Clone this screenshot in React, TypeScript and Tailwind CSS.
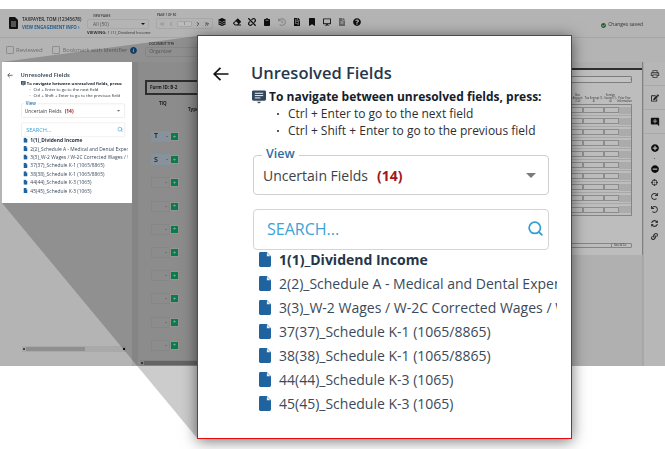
import React from "react";
import {
  FaLayerGroup, FaEraser, FaUnlink, FaClipboard, FaHistory, FaFileInvoice, FaBookmark, FaDesktop, FaFileAlt,
  FaQuestionCircle, FaCheckCircle, FaInfoCircle, FaPlusCircle, FaMinusCircle, FaCrosshairs, FaUndo, FaRedo, FaSyncAlt, FaLink, FaEdit,
} from "react-icons/fa";
import { MdAddComment, MdOutlinePrint } from "react-icons/md";
import { ChevronLeft, ChevronRight, ChevronsLeft, ChevronsRight, Search } from "lucide-react";

const files = [
  "2(2)_Schedule A - Medical and Dental Expenses",
  "3(3)_W-2 Wages / W-2C Corrected Wages / W-2G",
  "37(37)_Schedule K-1 (1065/8865)",
  "38(38)_Schedule K-1 (1065/8865)",
  "44(44)_Schedule K-3 (1065)",
  "45(45)_Schedule K-3 (1065)",
];

function FileIcon() {
  return (
    <svg width="12" height="15" viewBox="0 0 13 16" className="shrink-0">
      <path d="M1.5 0H8.5L13 4.5V14.5A1.5 1.5 0 0 1 11.5 16H1.5A1.5 1.5 0 0 1 0 14.5V1.5A1.5 1.5 0 0 1 1.5 0Z" fill="#20649f" />
      <path d="M8.5 0.5V4.5H12.5Z" fill="#e8eff5" />
    </svg>
  );
}

function MessageIcon() {
  return (
    <svg width="14" height="14" viewBox="0 0 15 14" className="shrink-0">
      <path d="M1.5 0H13.5A1.5 1.5 0 0 1 15 1.5V9.5A1.5 1.5 0 0 1 13.5 11H1.5A1.5 1.5 0 0 1 0 9.5V1.5A1.5 1.5 0 0 1 1.5 0Z" fill="#33475b" />
      <path d="M3 3H12M3 5.5H12M3 8H9" stroke="#fff" strokeWidth="1" />
      <path d="M5 12.2H10L7.5 14Z" fill="#33475b" />
    </svg>
  );
}

function Panel() {
  return (
    <div className="flex h-full w-full flex-col bg-white">
      <div className="mt-[24px] flex h-[27px] items-center">
        <svg width="16" height="14" viewBox="0 0 16 14" className="ml-[15px]">
          <path d="M15.5 7H1.5M7.5 0.8L1.2 7L7.5 13.2" fill="none" stroke="#111" strokeWidth="1.7" />
        </svg>
        <span className="ml-[22px] text-[16.5px] font-semibold text-[#26384c]">Unresolved Fields</span>
      </div>
      <div className="ml-[54px] mt-[1px] flex h-[17px] items-center">
        <MessageIcon />
        <span className="ml-[3px] whitespace-nowrap text-[12px] font-bold text-[#16202a]">To navigate between unresolved fields, press:</span>
      </div>
      <ul className="ml-[79px] text-[12px] text-[#2b2f33]">
        <li className="flex h-[17px] items-center whitespace-nowrap"><span className="mr-[9px] h-[2px] w-[2px] rounded-full bg-[#222]" />Ctrl + Enter to go to the next field</li>
        <li className="flex h-[17px] items-center whitespace-nowrap"><span className="mr-[9px] h-[2px] w-[2px] rounded-full bg-[#222]" />Ctrl + Shift + Enter to go to the previous field</li>
      </ul>
      <div className="relative ml-[55px] mt-[16px] flex h-[40px] w-[296px] items-center rounded-[4px] border border-[#cfcfcf] pl-[9px]">
        <span className="absolute -top-[11px] left-[8px] bg-white px-[4px] text-[12.5px] font-semibold leading-[18px] text-[#2d6ea5]">View</span>
        <span className="text-[14px] text-[#3d4247]">Uncertain Fields</span>
        <span className="ml-[9px] text-[14px] font-bold text-[#a3151b]">(14)</span>
        <span className="ml-auto mr-[12px] h-0 w-0 border-x-[5.5px] border-t-[5px] border-x-transparent border-t-[#7b7b7b]" />
      </div>
      <div className="ml-[55px] mt-[14px] flex h-[41px] w-[296px] items-center rounded-[4px] border border-[#d4d4d4] pb-[2px] pl-[13px]">
        <span className="text-[16px] text-[#3ba3d6]">SEARCH...</span>
        <Search className="ml-auto mr-[4px]" size={17} strokeWidth={2.4} color="#2f9fd2" />
      </div>
      <div className="-mt-[3px] ml-[61px] w-[298px] overflow-hidden">
        <div className="flex h-[24px] items-center gap-[8px] whitespace-nowrap text-[14px] font-bold text-[#25354a]"><FileIcon />1(1)_Dividend Income</div>
        {files.map((name) => (
          <div key={name} className="flex h-[24px] items-center gap-[8px] whitespace-nowrap text-[14px] text-[#3b4a5a]"><FileIcon />{name}</div>
        ))}
      </div>
    </div>
  );
}

function Tiny({ className, children }: { className: string; children: React.ReactNode }) {
  return <div className={`whitespace-nowrap leading-none ${className}`}>{children}</div>;
}

function Header() {
  const icons = [FaLayerGroup, FaEraser, FaUnlink, FaClipboard, FaHistory, FaFileInvoice, FaBookmark, FaDesktop, FaFileAlt, FaQuestionCircle];
  return (
    <div className="flex h-[29px] shrink-0 items-center border-b border-[#a6a6a6] pl-[9px]">
      <svg width="9" height="12" viewBox="0 0 9 12" className="shrink-0">
        <path d="M0 1A1 1 0 0 1 1 0H6L9 3V11A1 1 0 0 1 8 12H1A1 1 0 0 1 0 11Z" fill="#111" />
        <path d="M2 5H7M2 7H7M2 9H7" stroke="#bbb" strokeWidth="0.8" />
      </svg>
      <div className="ml-[4px] w-[62px]">
        <Tiny className="text-[4.5px] font-semibold text-[#222]">TAXPAYER, TOM (12345678)</Tiny>
        <Tiny className="mt-[3px] text-[4.4px] font-bold text-[#23608f]">VIEW ENGAGEMENT INFO ›</Tiny>
      </div>
      <div className="ml-[3px] w-[66px] pt-[5px]">
        <Tiny className="ml-[6px] text-[3px] font-semibold text-[#333]">VIEW PAGES</Tiny>
        <div className="mt-[1px] flex h-[10px] w-[62px] items-center rounded-[2px] border border-[#a8a8a8] pl-[5px] text-[5px] text-[#555]">
          All (50)
          <span className="ml-auto mr-[3px] h-0 w-0 border-x-[2px] border-t-[2px] border-x-transparent border-t-[#111]" />
        </div>
        <Tiny className="mt-[2px] text-[4.2px] text-[#333]"><b>VIEWING:</b> 1 (1)_Dividend Income</Tiny>
      </div>
      <div className="ml-[3px] w-[58px] pb-[3px]">
        <Tiny className="mb-[1px] ml-[1px] text-[3px] font-semibold text-[#333]">PAGE 1 OF 50</Tiny>
        <div className="flex h-[11px] w-[57px] items-center justify-between rounded-[2px] border border-[#a8a8a8] px-[2px]">
          <ChevronsLeft size={6} color="#666" />
          <ChevronLeft size={6} color="#666" />
          <span className="flex h-[6px] w-[15px] items-center justify-center rounded-[1px] border border-[#a5a5a5] bg-[#bcbcbc] text-[4px] text-[#444]">1</span>
          <ChevronRight size={6} strokeWidth={3} color="#222" />
          <ChevronsRight size={6} strokeWidth={3} color="#222" />
        </div>
      </div>
      <div className="flex pb-[2px]">
        {icons.map((Icon, i) => (
          <span key={i} className="flex w-[15px] justify-center">
            <Icon size={8} color={i === 4 ? "#848484" : i === 8 ? "#666" : "#0f0f0f"} />
          </span>
        ))}
      </div>
      <div className="ml-auto mr-[22px] flex items-center gap-[2px] pt-[4px]">
        <FaCheckCircle size={5} color="#1f5f2c" />
        <span className="text-[5px] text-[#333]">Changes saved</span>
      </div>
    </div>
  );
}

function SubBar() {
  return (
    <div className="flex h-[24px] shrink-0 items-center pl-[6px] text-[#6e6e6e]">
      <span className="h-[8px] w-[8px] rounded-[1px] border border-[#8e8e8e]" />
      <span className="ml-[2px] text-[6px]">Reviewed</span>
      <span className="ml-[9px] h-[8px] w-[8px] rounded-[1px] border border-[#8e8e8e]" />
      <span className="ml-[3px] text-[5.6px]">Bookmark with Identifier</span>
      <FaInfoCircle className="ml-[3px]" size={7} color="#144c80" />
      <div className="ml-[8px]">
        <Tiny className="ml-[4px] text-[3px] font-semibold text-[#333]">DOCUMENT TYPE</Tiny>
        <div className="mt-[1px] flex h-[10px] w-[120px] items-center rounded-[2px] border border-[#a8a8a8] pl-[3px] text-[5px]">Organizer</div>
      </div>
    </div>
  );
}

function Scroll({ className, thumb }: { className: string; thumb: string }) {
  return (
    <div className={`flex h-[6px] items-center ${className}`}>
      <span className="mx-[1px] h-[2px] w-[2px] bg-[#444]" />
      <span className={`h-[4px] w-[59px] ${thumb}`} />
      <span className="ml-auto mr-[1px] h-[2px] w-[2px] bg-[#111]" />
    </div>
  );
}

function DocLeft() {
  const rows = ["T", "S", "", "", "", "", "", "", "", ""];
  return (
    <div className="flex w-[66px] shrink-0 flex-col">
      <div className="ml-[7px] mt-[18px] flex h-[15px] w-[70px] items-center border-2 border-[#3a3a3a] pl-[3px] text-[4.5px] font-bold text-[#222]">Form ID: B-2</div>
      <div className="relative h-[30px] text-[4.5px] font-bold text-[#222]">
        <span className="absolute left-[21px] top-[5px]">TIQ</span>
        <span className="absolute left-[50px] top-[11px]">Type</span>
      </div>
      {rows.map((r, i) => (
        <div key={i} className="ml-[13px] flex h-[23.2px] items-center">
          <span className={`flex h-[11px] w-[19px] items-center rounded-[1px] pl-[3px] text-[7px] font-semibold text-[#222] ${r ? "bg-[#a9b8c3]" : "border border-[#a8a8a8]"}`}>
            {r}
            <span className="ml-auto mr-[2px] h-[1px] w-[2px] bg-[#8a8a8a]" />
          </span>
          <span className="ml-[1px] flex h-[7px] w-[7px] items-center justify-center bg-[#109a60] text-[6px] leading-none text-[#c4e2d2] ring-1 ring-[#b9b9b9]">+</span>
        </div>
      ))}
      <Scroll className="ml-[2px] mt-auto w-[120px] bg-[#a4a4a4]" thumb="bg-[#7d7d7d]" />
    </div>
  );
}

function DocRight() {
  const heads = ["Box Amount (1-4)", "Tax Exempt (1-4)", "Foreign Source (1-4)", "Prior Year Information"];
  const widths = ["w-[14px]", "w-[21px]", "w-[14px]", "w-[16px]"];
  return (
    <div className="ml-auto mr-[10px] flex w-[61px] flex-col">
      <div className="mt-[6px] h-[7px] rounded-[1px] border border-[#7d7d7d] bg-[#c2c2c2] text-right text-[3px] leading-[5px] text-[#333]">▫</div>
      <div className="mt-[11px] flex h-[9px] items-end">
        {heads.map((h, i) => (
          <span key={h} className={`${widths[i]} text-center text-[2.6px] font-semibold leading-[3px] text-[#555]`}>{h}</span>
        ))}
      </div>
      <div className="mt-[1px] rounded-[1px] border-y border-r border-[#858585]">
        {Array.from({ length: 10 }).map((_, i) => (
          <div key={i} className="flex h-[11px] items-center border-b border-[#a8a8a8] last:border-b-0">
            <span className="h-[6px] w-[13px] border-y border-r-2 border-[#8c8c8c]" />
            <span className="h-[6px] w-[21px] border-y border-r-2 border-[#8c8c8c]" />
            <span className="h-[6px] w-[14px] border-y border-r border-[#8c8c8c]" />
            <span className="h-[7px] flex-1 bg-[#ababab]" />
          </div>
        ))}
      </div>
      <div className="mt-[27px] flex h-[5px] items-center rounded-[1px] border border-[#858585]">
        <span className="h-full w-[40px] border-r border-[#858585]" />
        <span className="ml-[2px] text-[2.6px] leading-none text-[#333]">Save &amp; Go</span>
      </div>
    </div>
  );
}

function Rail() {
  const tools = [FaPlusCircle, null, FaMinusCircle, FaCrosshairs, FaRedo, FaUndo, FaSyncAlt, FaLink];
  return (
    <div className="flex w-[22px] shrink-0 flex-col items-center border-l border-[#a8a8a8] bg-[#b7b7b7]">
      <div className="flex h-[24px] w-full items-center justify-center border-b border-[#a8a8a8]"><MdOutlinePrint size={10} color="#333" /></div>
      <div className="flex h-[24px] w-full items-center justify-center border-b border-[#a8a8a8]"><FaEdit size={8} color="#222" /></div>
      <div className="flex h-[24px] w-full items-center justify-center border-b border-[#a8a8a8]"><MdAddComment size={10} color="#111" /></div>
      <div className="mt-[7px] flex flex-col items-center">
        {tools.map((T, i) => (
          <span key={i} className={`flex items-center justify-center ${i === 1 ? "h-[8px]" : "h-[13.5px]"}`}>
            {T ? <T size={i < 3 ? 8 : 7} color={i < 3 ? "#0c0c0c" : "#333"} /> : <span className="h-[1px] w-[1px] bg-[#666]" />}
          </span>
        ))}
      </div>
    </div>
  );
}

export default function App() {
  return (
    <div className="relative h-[449px] w-[665px] overflow-hidden bg-white pt-[9px] [font-family:'Open_Sans',sans-serif]">
      <div className="flex h-[357px] flex-col bg-[#b4b4b4] blur-[0.5px]">
        <Header />
        <SubBar />
        <div className="flex flex-1">
          <div className="flex w-[132px] shrink-0 flex-col justify-end pb-[14px]">
            <Scroll className="ml-[22px] w-[104px] bg-[#a9a9a9]" thumb="bg-[#8f8f8f]" />
          </div>
          <div className="flex min-w-0 flex-1 bg-[#a7a7a7] pl-[6px]">
            <div className="flex min-w-0 flex-1 bg-[#b0b0b0]">
              <DocLeft />
              <div className="flex h-[193px] flex-1 flex-col">
                <div className="h-[6px] shrink-0" />
                <div className="flex flex-1 border-t-2 border-t-[#2e2e2e] bg-[#bdbdbd]">
                  <DocRight />
                </div>
              </div>
            </div>
            <span className="h-[193px] w-[1px] bg-[#7f7f7f]" />
          </div>
          <Rail />
        </div>
      </div>

      <svg className="absolute left-0 top-0 z-10" width="665" height="449" viewBox="0 0 665 449">
        <polygon points="2,62 197,36 197,438 2,203" fill="#000" fillOpacity="0.2" />
      </svg>

      <div className="absolute left-[2px] top-[62px] z-20 h-[141px] w-[130px] overflow-hidden bg-white blur-[0.3px]">
        <div className="h-[403px] w-[375px] origin-top-left scale-[0.35]">
          <Panel />
        </div>
      </div>

      <div className="absolute left-[197px] top-[35px] z-30 h-[404px] w-[375px] border border-[#e30b0b] shadow-[0_2px_14px_rgba(0,0,0,0.55)]">
        <Panel />
      </div>
    </div>
  );
}
